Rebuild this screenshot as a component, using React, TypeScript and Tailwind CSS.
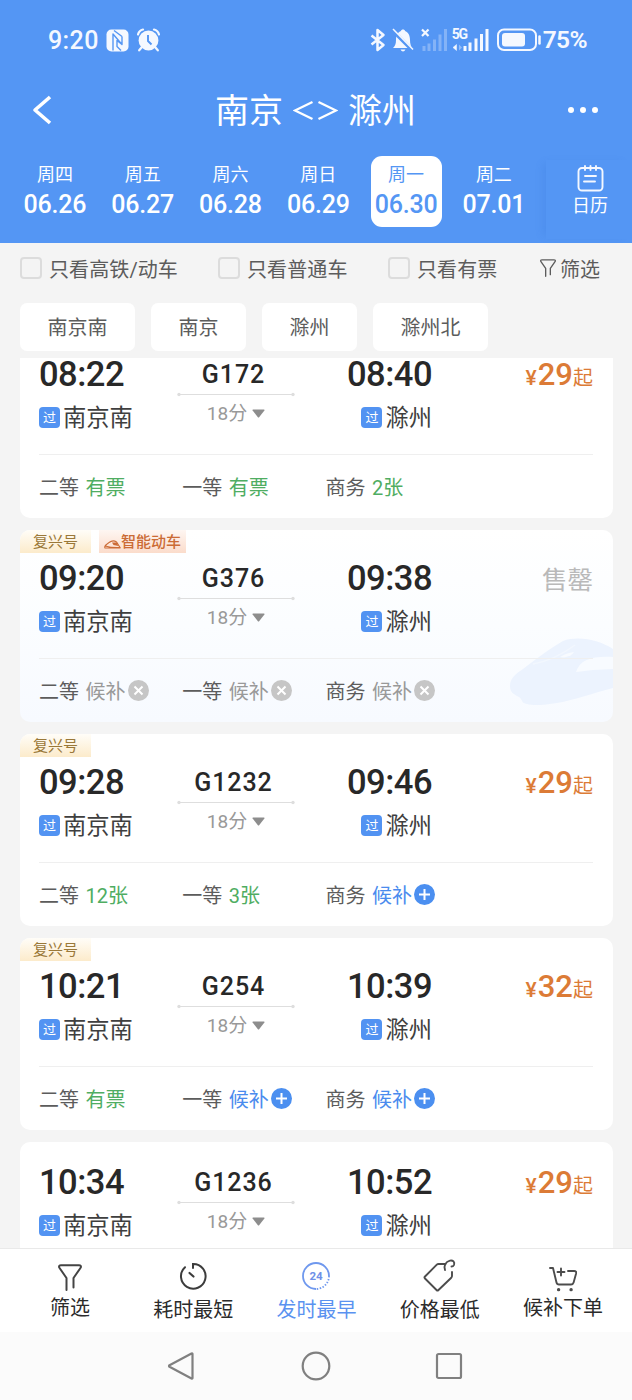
import type { ReactNode } from 'react';

type SeatState = 'open' | 'closed' | 'waitlist';

interface Seat {
  name: string;
  value: string;
  state: SeatState;
}

interface Train {
  no: string;
  depart: string;
  arrive: string;
  price: string | null;
  fuxing: boolean;
  smart?: boolean;
  seats: Seat[];
}

const dates = [
  { week: '周四', day: '06.26' },
  { week: '周五', day: '06.27' },
  { week: '周六', day: '06.28' },
  { week: '周日', day: '06.29' },
  { week: '周一', day: '06.30', active: true },
  { week: '周二', day: '07.01' },
];

const trains: Train[] = [
  {
    no: 'G172', depart: '08:22', arrive: '08:40', price: '29', fuxing: false,
    seats: [
      { name: '二等', value: '有票', state: 'open' },
      { name: '一等', value: '有票', state: 'open' },
      { name: '商务', value: '2张', state: 'open' },
    ],
  },
  {
    no: 'G376', depart: '09:20', arrive: '09:38', price: null, fuxing: true, smart: true,
    seats: [
      { name: '二等', value: '候补', state: 'closed' },
      { name: '一等', value: '候补', state: 'closed' },
      { name: '商务', value: '候补', state: 'closed' },
    ],
  },
  {
    no: 'G1232', depart: '09:28', arrive: '09:46', price: '29', fuxing: true,
    seats: [
      { name: '二等', value: '12张', state: 'open' },
      { name: '一等', value: '3张', state: 'open' },
      { name: '商务', value: '候补', state: 'waitlist' },
    ],
  },
  {
    no: 'G254', depart: '10:21', arrive: '10:39', price: '32', fuxing: true,
    seats: [
      { name: '二等', value: '有票', state: 'open' },
      { name: '一等', value: '候补', state: 'waitlist' },
      { name: '商务', value: '候补', state: 'waitlist' },
    ],
  },
  { no: 'G1236', depart: '10:34', arrive: '10:52', price: '29', fuxing: false, seats: [] },
];

const seatColor: Record<SeatState, string> = {
  open: 'text-[#4fad62]',
  closed: 'text-[#999999]',
  waitlist: 'text-[#4a8bee]',
};

function StatusBar() {
  return (
    <div className="flex h-20 items-center justify-between pl-[48px] pr-[45px] text-[#f4f8ff]">
      <div className="flex items-center">
        <span className="w-[51px] text-[25px] font-medium leading-none tracking-[0.4px]">9:20</span>
        <svg className="ml-[7px]" width="23" height="23" viewBox="0 0 23 23">
          <rect x="0.5" y="0.5" width="22" height="22" rx="5" fill="currentColor" />
          <path d="M7 21.500V5l9 10.500V7.500M8 1.500l8 6M7 21.500M16 15.500l-5-4v6l4 4" fill="none" stroke="#5496f4" strokeWidth="1.400" strokeLinejoin="round" />
        </svg>
        <svg className="ml-2" width="23" height="24" viewBox="0 0 23 24">
          <circle cx="11.500" cy="12.500" r="9.900" fill="currentColor" />
          <path d="M1 6.500Q2 2.500 6 1.500M22 6.500Q21 2.500 17 1.500M4.500 19.500l-2.300 2.800M18.500 19.500l2.300 2.800" stroke="currentColor" strokeWidth="2.200" fill="none" strokeLinecap="round" />
          <path d="M11 7v6l3.500 3.500" stroke="#5496f4" strokeWidth="1.900" fill="none" />
        </svg>
      </div>
      <div className="flex items-center">
        <svg width="16" height="24" viewBox="0 0 16 24" fill="none" stroke="currentColor" strokeWidth="2.500" strokeLinejoin="round">
          <path d="M1.500 7.500l12 9.500-6 5V2l6 5-12 9.500" />
        </svg>
        <svg className="ml-[6px]" width="22" height="24" viewBox="0 0 22 24">
          <path d="M1 20c2-2 3-4 3-8 0-5 2-8 5-9 0-2 4-2 4 0 3 1 5 4 5 9 0 4 1 6 2 8zM8.500 21.500h5q-1 2-2.500 2t-2.500-2z" fill="currentColor" />
          <path d="M0 2l20 20" stroke="#5496f4" strokeWidth="3.500" />
          <path d="M1 1l20 20.500" stroke="currentColor" strokeWidth="1.500" />
        </svg>
        <svg className="ml-[7px]" width="27" height="24" viewBox="0 0 27 24" stroke="currentColor">
          <path d="M1 1.500l6.500 6.500M7.500 1.500L1 8" strokeWidth="2.200" />
          <path d="M3 18v5M8 15.500V23M13.500 11.500V23M19 6.500V23M24.500 1v22" strokeWidth="3" opacity="0.3" />
        </svg>
        <span className="relative ml-[4px] block">
          <svg width="38" height="24" viewBox="0 0 38 24" stroke="currentColor">
            <path d="M13 18v5M18 14.500V23M24 10.500V23M29.500 6V23M35 1v22" strokeWidth="3" />
            <path d="M1 19.500l3.500-3v6z" fill="currentColor" strokeWidth="0.500" />
            <path d="M10 19.500l-3-3v6z" fill="currentColor" opacity="0.4" stroke="none" />
          </svg>
          <span className="absolute left-0 top-0 text-[14px] font-bold leading-[12px] tracking-[-1.2px]">5G</span>
        </span>
        <svg className="ml-[7px]" width="45" height="24" viewBox="0 0 45 24">
          <rect x="1" y="1.500" width="38" height="20.500" rx="6" fill="none" stroke="currentColor" strokeWidth="2" />
          <rect x="5" y="5" width="23" height="13.500" rx="3" fill="currentColor" />
          <path d="M42.500 8.500v7" stroke="currentColor" strokeWidth="2.500" strokeLinecap="round" />
        </svg>
        <span className="ml-px text-[24.500px] font-semibold leading-none tracking-[-0.6px]">75%</span>
      </div>
    </div>
  );
}

function TitleBar() {
  return (
    <div className="flex h-[60px] items-center justify-between pl-[31px] pr-[33px]">
      <svg width="33" height="30" viewBox="0 0 33 30" fill="none" stroke="#fff" strokeWidth="3.600">
        <path d="M19 2L4 15l15 13" strokeLinejoin="round" />
      </svg>
      <h1 className="flex items-center pt-[2px] text-[34px] leading-none">
        <span>南京</span>
        <svg className="mx-[10px] -mt-1" width="45" height="24" viewBox="0 0 45 24" fill="none" stroke="#fff" strokeWidth="2.300">
          <path d="M19.500 5L2 13.500 19.500 22M25.500 5L43 13.500 25.500 22" />
        </svg>
        <span>滁州</span>
      </h1>
      <svg width="32" height="8" viewBox="0 0 32 8" fill="#fff">
        <circle cx="4" cy="4" r="3" />
        <circle cx="16" cy="4" r="3" />
        <circle cx="28" cy="4" r="3" />
      </svg>
    </div>
  );
}

function DateStrip() {
  return (
    <div className="flex h-[103px]">
      <div className="flex w-[546px] pl-[11px] pt-4">
        {dates.map((d) => (
          <div key={d.day} className="flex w-[87.8px] justify-center">
            <div className={`flex h-[71px] w-[71px] flex-col items-center rounded-[11px] pt-2 ${d.active ? 'bg-white text-[#5496f4]' : ''}`}>
              <span className="text-[18px] leading-[22px]">{d.week}</span>
              <span className="mt-1 text-[25px] font-medium leading-[29px] -tracking-[0.2px]">{d.day}</span>
            </div>
          </div>
        ))}
      </div>
      <div className="mb-1 mt-5 flex flex-1 flex-col items-center pl-0.5 pt-[5px] shadow-[-6px_0_8px_-4px_rgba(50,110,210,0.22)]">
        <svg width="27" height="27" viewBox="0 0 27 27" fill="none" stroke="#f4f8ff" strokeWidth="1.900" strokeLinecap="round">
          <rect x="1.500" y="3" width="24" height="22.500" rx="3.500" />
          <path d="M8 1v4M13.500 1v4M19 1v4M8 11h11M7 16.500h11" />
        </svg>
        <span className="mt-[3px] text-[18px] leading-[22px]">日历</span>
      </div>
    </div>
  );
}

function Funnel({ className }: { className?: string }) {
  return (
    <svg className={className} viewBox="0 0 24 27" fill="none" stroke="currentColor" strokeWidth="2" strokeLinejoin="round" strokeLinecap="round">
      <path d="M8.500 26V14L1.200 3.500Q.5 1.200 3 1.200h18q2.500 0 1.800 2.300L15.500 14v9.500" />
    </svg>
  );
}

function Filters() {
  return (
    <div className="flex h-[50px] items-center pl-5 text-[20px] text-[#5c5c5c]">
      {[
        { label: '只看高铁/动车', width: 'w-[198px]' },
        { label: '只看普通车', width: 'w-[170px]' },
        { label: '只看有票', width: 'w-[152px]' },
      ].map((f) => (
        <label key={f.label} className={`flex items-center gap-[7px] ${f.width}`}>
          <span className="h-[22px] w-[22px] rounded-[4px] border-2 border-[#dcdcdc]" />
          <span className="pt-[3px] leading-none tracking-[0.1px]">{f.label}</span>
        </label>
      ))}
      <Funnel className="h-[18px] w-[16px]" />
      <span className="ml-1 pt-[3px] leading-none">筛选</span>
    </div>
  );
}

function Stations() {
  return (
    <div className="flex gap-4 px-5 pb-[7px] pt-[10px] text-[20px] text-[#5c5c5c]">
      <div className="flex h-12 w-[115px] items-center justify-center rounded-[7px] bg-white pt-[2px]">南京南</div>
      <div className="flex h-12 w-[95px] items-center justify-center rounded-[7px] bg-white pt-[2px]">南京</div>
      <div className="flex h-12 w-[95px] items-center justify-center rounded-[7px] bg-white pt-[2px]">滁州</div>
      <div className="flex h-12 w-[115px] items-center justify-center rounded-[7px] bg-white pt-[2px]">滁州北</div>
    </div>
  );
}

function Stop({ name }: { name: string }) {
  return (
    <div className="flex items-center">
      <span className="mb-px flex h-[21px] w-[21px] items-center justify-center rounded-[4px] bg-[#5293f2] pt-px text-[13px] leading-none text-white">过</span>
      <span className="ml-[3px] pt-[2px] text-[23.300px] leading-none text-[#3f3f3f]">{name}</span>
    </div>
  );
}

function SeatMark({ state }: { state: SeatState }) {
  if (state === 'open') return null;
  return (
    <svg className="mb-[3px] ml-[2px]" width="21" height="21" viewBox="0 0 21 21" stroke="#fff" strokeWidth="2">
      <circle cx="10.500" cy="10.500" r="10.500" fill={state === 'closed' ? '#c6c6c6' : '#4b8ff0'} stroke="none" />
      <path d={state === 'closed' ? 'M6.500 6.500l8 8M14.500 6.500l-8 8' : 'M10.500 5v11M5 10.500h11'} />
    </svg>
  );
}

function BulletTrain() {
  return (
    <svg className="absolute right-0 top-[106px]" width="104" height="74" viewBox="0 0 104 74">
      <path d="M1 50C1 43 6 38 14 33C28 22 42 12 54 5C70 -1 92 5 104 13V52C84 57 66 64 48 67C36 69 24 70 18 68C12 67 14 64 10 61C4 58 1 56 1 50Z" fill="#ecf3fe" />
      <path d="M67 36C71 24 82 20 104 21V33L84 34Z" fill="#f8fbff" />
      <path d="M51 21Q57 17 65 16Q63 20 55 21.500Z" fill="#f8fbff" />
      <path d="M24 28Q46 24 66 9" stroke="#f2f7fe" strokeWidth="1.500" fill="none" />
    </svg>
  );
}

function TrainCard({ train }: { train: Train }) {
  const soldOut = train.price === null;
  return (
    <article className={`relative shrink-0 overflow-hidden rounded-[10px] ${soldOut ? 'bg-linear-to-b from-white via-[#fbfdff] to-[#f7faff]' : 'bg-white'}`}>
      {soldOut && <BulletTrain />}
      {train.fuxing ? (
        <div className="flex h-[24px] gap-2 pb-px text-[15px]">
          <span className="flex w-[71px] items-center justify-center bg-linear-to-b from-[#fffdf8] to-[#fcebcb] pt-[2px] leading-none text-[#9a7838]">复兴号</span>
          {train.smart && (
            <span className="flex w-[87px] items-center justify-center bg-linear-to-b from-[#fef6f2] to-[#fbdccb] pt-[2px] font-medium leading-none text-[#cb6b35]">
              <svg className="mt-[3px]" width="17" height="9" viewBox="0 0 17 9" fill="none" stroke="currentColor" strokeWidth="1.100">
                <path d="M.5 7.500Q1 5 5 2.500Q9-.5 12.500 2L16 7.500Q8 8 1 6M.5 8h16" />
                <path d="M8 2.500l4.500 0 2 3.500-5-1z" fill="currentColor" stroke="none" />
              </svg>
              智能动车
            </span>
          )}
        </div>
      ) : (
        <div className="h-4" />
      )}
      <div className="relative pl-[19px] pr-5">
        <div className="flex h-[105px] border-b border-[#efefef]">
          <div className="w-[138px] pt-1">
            <div className="text-[34.500px] font-medium leading-[40px] tracking-[-0.5px] text-[#282828]">{train.depart}</div>
            <div className="mt-[11px]"><Stop name="南京南" /></div>
          </div>
          <div className="flex w-[118px] flex-col items-center">
            <div className="mt-[10px] pr-[5px] text-[25px] font-medium leading-[30px] tracking-[0.9px] text-[#282828]">{train.no}</div>
            <svg className="mt-[2px]" width="118" height="5" viewBox="0 0 118 5" fill="#dedede">
              <path d="M2 2h114v1H2z" />
              <circle cx="2" cy="2.500" r="1.700" />
              <circle cx="116" cy="2.500" r="1.700" />
            </svg>
            <div className="mt-[5px] flex items-center text-[19px] leading-[24px] text-[#999999]">
              18分
              <svg className="mb-px ml-[5px]" width="13" height="9" viewBox="0 0 13 9" fill="#8d8d8d">
                <path d="M1 .5h11q1 0 .4 1L7.300 8q-.8 1-1.600 0L.6 1.500Q0 .5 1 .5z" />
              </svg>
            </div>
          </div>
          <div className="flex w-[137px] flex-col items-end pt-1">
            <div className="text-[34.500px] font-medium leading-[40px] tracking-[-0.5px] text-[#282828]">{train.arrive}</div>
            <div className="mt-[11px]"><Stop name="滁州" /></div>
          </div>
          <div className="flex flex-1 justify-end pt-[9px]">
            {soldOut ? (
              <span className="text-[25.500px] leading-[34px] text-[#b9b9b9]">售罄</span>
            ) : (
              <span className="flex items-baseline leading-[32px] text-[#dc7b36]">
                <span className="text-[21px] font-medium">¥</span>
                <span className="ml-px text-[31px] font-medium">{train.price}</span>
                <span className="text-[20px]">起</span>
              </span>
            )}
          </div>
        </div>
        <div className="flex h-[63px] pt-[21px] text-[20px] leading-[24px]">
          {train.seats.map((s) => (
            <div key={s.name} className="flex h-6 w-[143.300px] items-center">
              <span className="text-[#5c5c5c]">{s.name}</span>
              <span className={`ml-[6.500px] ${seatColor[s.state]}`}>{s.value}</span>
              <SeatMark state={s.state} />
            </div>
          ))}
        </div>
      </div>
    </article>
  );
}

function Tab({ icon, label, className = '' }: { icon: ReactNode; label: string; className?: string }) {
  return (
    <div className={`flex flex-1 flex-col items-center ${className}`}>
      <div className="flex h-[34px] items-end">{icon}</div>
      <span className="pl-px pt-[2px] text-[20px] leading-[24px]">{label}</span>
    </div>
  );
}

function TabBar() {
  return (
    <nav className="flex h-[84px] shrink-0 border-t border-[#e9e9e9] bg-white px-2 pt-[11px] text-[#2b2b2b]">
      <Tab label="筛选" icon={<Funnel className="mb-[3px] h-[27px] w-[24px] text-[#444444]" />} />
      <Tab
        label="耗时最短"
        className="pt-[2px]"
        icon={
          <svg className="mb-[6px]" width="28" height="28" viewBox="0 0 28 28" fill="none" stroke="#3c3c3c" strokeWidth="2" strokeLinecap="round">
            <path d="M14 6V2a12.300 12.300 0 1 1-8 3.200" />
            <path d="M10.500 11l4 3.500" strokeWidth="2.200" />
          </svg>
        }
      />
      <Tab
        label="发时最早"
        className="pt-[2px] text-[#5a92f0]"
        icon={
          <svg className="mb-[6px]" width="28" height="28" viewBox="0 0 28 28" fill="none" stroke="#6f98ee" strokeWidth="1.800">
            <path d="M14 27A13 13 0 1 1 27 14" />
            <path d="M27 14A13 13 0 0 1 14 27" strokeDasharray="1.500 1.500" />
            <text x="14" y="18" textAnchor="middle" fontSize="11.500" fontWeight="700" fill="#6f90e8" stroke="none">24</text>
          </svg>
        }
      />
      <Tab
        label="价格最低"
        className="pt-[2px]"
        icon={
          <svg className="mb-[4px]" width="33" height="33" viewBox="0 0 33 33" fill="none" stroke="#4c4c4c" strokeWidth="1.900" strokeLinecap="round" strokeLinejoin="round">
            <path d="M22.500 5h-7q-1 0-1.700.7L2 17.500q-1 1 0 2L13.500 31q1 1 2 0L28 19q1-1 1-2v-4" />
            <path d="M22 11C20.500 7 22.500 2.500 27 1.600c3-.6 5 1.500 4 4.200-.6 1.200-1.500 1.700-2.500 1.700" />
          </svg>
        }
      />
      <Tab
        label="候补下单"
        icon={
          <svg className="mb-[2px] ml-[2px]" width="28" height="26" viewBox="0 0 28 26" fill="none" stroke="#4c4c4c" strokeWidth="1.900" strokeLinecap="round" strokeLinejoin="round">
            <path d="M1 2h3L7.500 16.500q.5 2 2.500 2h12q2 0 2.600-2l2.500-9q.6-2.500-2-2.500H19" />
            <path d="M12 2.500v7M8.500 6h7" />
            <path d="M9.500 23.700h.2M22 23.700h.2" strokeWidth="3.200" />
          </svg>
        }
      />
    </nav>
  );
}

function SystemNav() {
  return (
    <div className="flex h-[68px] shrink-0 items-center bg-[#fbfbfb] pl-[167px]">
      <svg width="28" height="30" viewBox="0 0 28 30" fill="none" stroke="#808080" strokeWidth="2.200" strokeLinejoin="round">
        <path d="M25.500 3v24q0 1-1 .5L2.500 15.800q-1-.8 0-1.600L24.500 2.500q1-.5 1 .5z" />
      </svg>
      <svg className="ml-[106px]" width="30" height="30" viewBox="0 0 30 30" fill="none" stroke="#808080" strokeWidth="2.200">
        <circle cx="15" cy="15" r="13.300" />
      </svg>
      <svg className="ml-[104px]" width="28" height="28" viewBox="0 0 28 28" fill="none" stroke="#808080" strokeWidth="2.200">
        <rect x="2" y="2" width="24" height="24" rx="1.500" />
      </svg>
    </div>
  );
}

export default function App() {
  return (
    <div className="flex h-[1400px] w-[632px] flex-col overflow-hidden bg-[#f4f4f4] font-[Roboto,'Noto_Sans_CJK_SC',sans-serif]">
      <header className="h-[243px] shrink-0 bg-[#5496f4] text-white">
        <StatusBar />
        <TitleBar />
        <DateStrip />
      </header>
      <Filters />
      <Stations />
      <main className="min-h-0 flex-1 overflow-hidden pl-5 pr-[19px]">
        <div className="-mt-6 flex flex-col gap-3">
          {trains.map((t) => (
            <TrainCard key={t.no} train={t} />
          ))}
        </div>
      </main>
      <TabBar />
      <SystemNav />
    </div>
  );
}
